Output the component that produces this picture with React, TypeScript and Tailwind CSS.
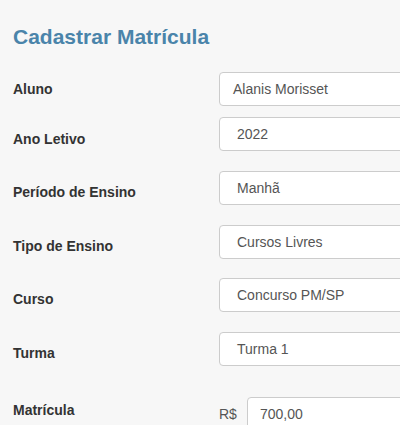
export default function App() {
  const rows = [
    { label: "Aluno", value: "Alanis Morisset", mt: "mt-0", lp: "pt-[7px]", pad: "pl-[13px]" },
    { label: "Ano Letivo", value: "2022", mt: "mt-[11px]", lp: "pt-[12px]", pad: "pl-[17px]" },
    { label: "Período de Ensino", value: "Manhã", mt: "mt-[20px]", lp: "pt-[11px]", pad: "pl-[17px]" },
    { label: "Tipo de Ensino", value: "Cursos Livres", mt: "mt-[20px]", lp: "pt-[11px]", pad: "pl-[17px]" },
    { label: "Curso", value: "Concurso PM/SP", mt: "mt-[19px]", lp: "pt-[11px]", pad: "pl-[17px]" },
    { label: "Turma", value: "Turma 1", mt: "mt-[20px]", lp: "pt-[11px]", pad: "pl-[17px]" },
  ]

  return (
    <div className="min-h-screen bg-[#f7f7f7] font-['Liberation_Sans',Arial,sans-serif] pl-[13px] overflow-hidden">
      <h1 className="pt-[25px] text-[21px] font-bold leading-[24px] text-[#4a84aa]">Cadastrar Matrícula</h1>

      <div className="mt-[23px] flex flex-col">
        {rows.map((r) => (
          <div key={r.label} className={`flex items-start ${r.mt}`}>
            <label className={`w-[206px] shrink-0 ${r.lp} text-[14px] leading-[20px] font-bold text-[#333]`}>
              {r.label}
            </label>
            <div
              className={`h-[34px] w-[200px] shrink-0 rounded-[4px] border border-[#ccc] bg-white ${r.pad} flex items-center text-[14px] text-[#555]`}
            >
              {r.value}
            </div>
          </div>
        ))}

        <div className="mt-[31px] flex items-start">
          <label className="w-[206px] shrink-0 pt-[3px] text-[14px] leading-[20px] font-bold text-[#333]">
            Matrícula
          </label>
          <span className="w-[28px] shrink-0 pt-[7px] text-[14px] leading-[20px] text-[#555]">R$</span>
          <div className="h-[34px] w-[200px] shrink-0 rounded-[4px] border border-[#ccc] bg-white pl-[12px] flex items-center text-[14px] text-[#555]">
            700,00
          </div>
        </div>
      </div>
    </div>
  )
}
